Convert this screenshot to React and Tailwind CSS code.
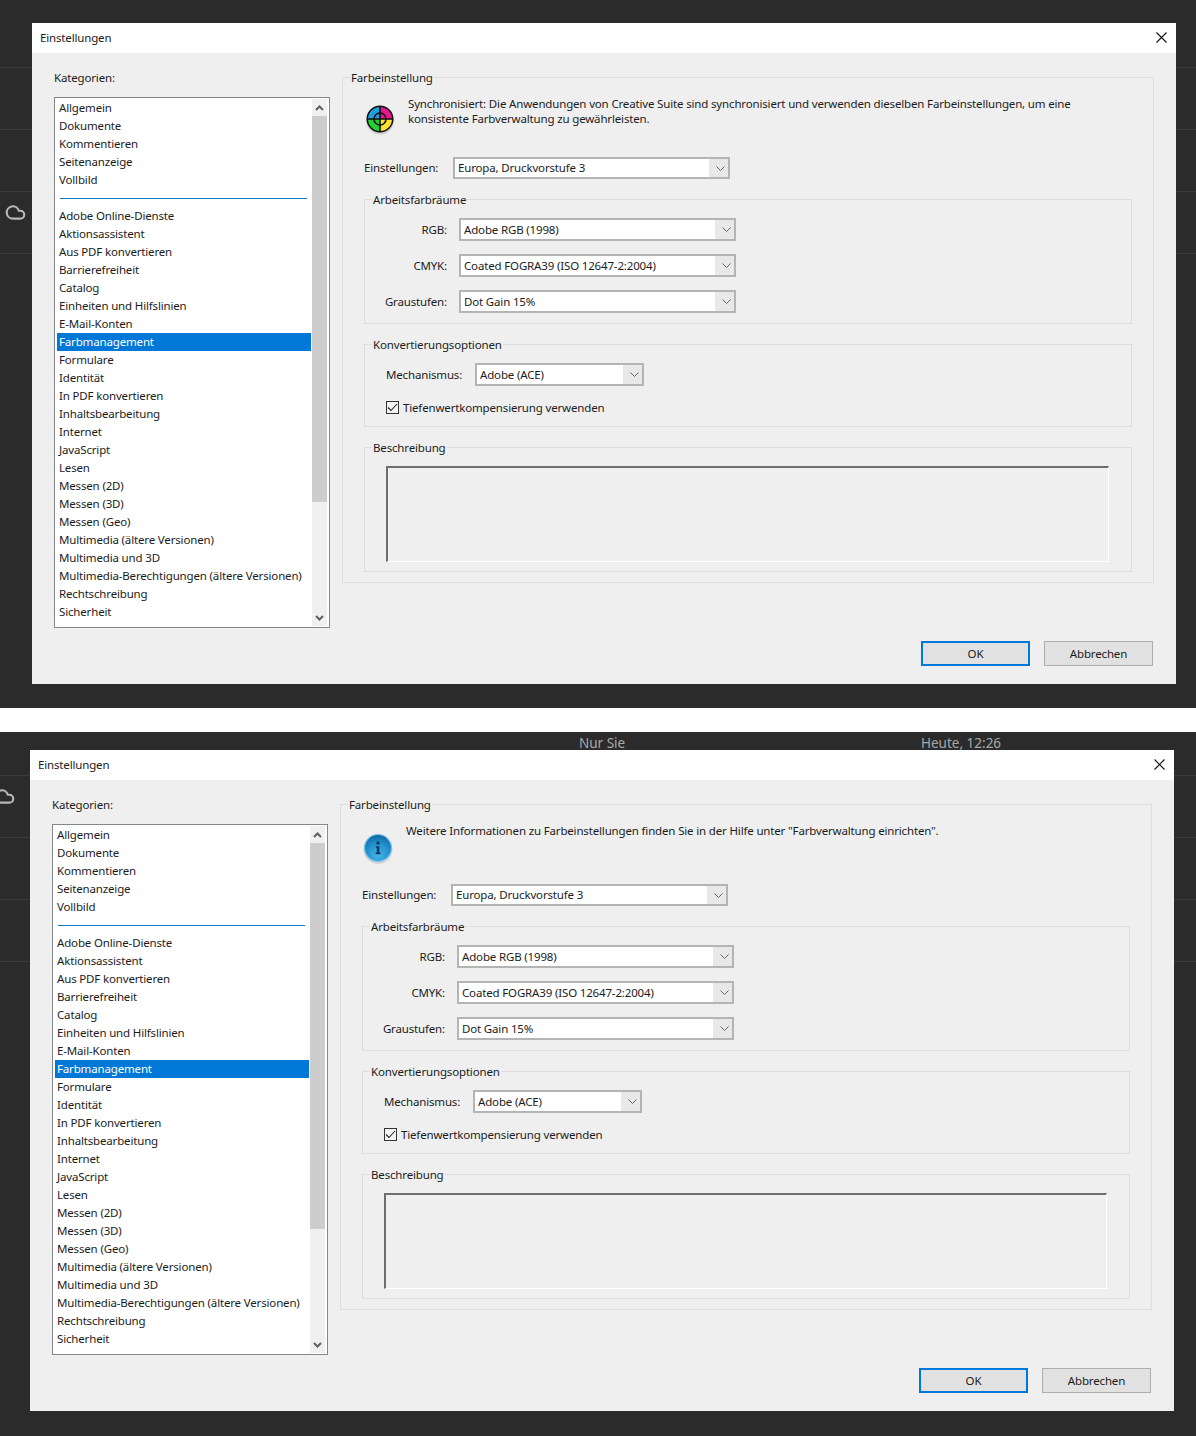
import React from 'react'
import { Cloud } from 'lucide-react'

const topItems = ['Allgemein', 'Dokumente', 'Kommentieren', 'Seitenanzeige', 'Vollbild']
const items = [
  'Adobe Online-Dienste', 'Aktionsassistent', 'Aus PDF konvertieren', 'Barrierefreiheit', 'Catalog',
  'Einheiten und Hilfslinien', 'E-Mail-Konten', 'Farbmanagement', 'Formulare', 'Identität',
  'In PDF konvertieren', 'Inhaltsbearbeitung', 'Internet', 'JavaScript', 'Lesen', 'Messen (2D)',
  'Messen (3D)', 'Messen (Geo)', 'Multimedia (ältere Versionen)', 'Multimedia und 3D',
  'Multimedia-Berechtigungen (ältere Versionen)', 'Rechtschreibung', 'Sicherheit', 'Sicherheit (erweitert)',
]

function Row({ label }) {
  const selected = label === 'Farbmanagement'
  return (
    <div className={`h-[18px] shrink-0 pl-[2px] leading-[17px] whitespace-nowrap ${selected ? 'bg-[#0078d7] text-white' : ''}`}>
      {label}
    </div>
  )
}

function Arrow({ up }) {
  return (
    <div className="h-[17px] flex items-center justify-center shrink-0">
      <svg width="9" height="6" viewBox="0 0 9 6" fill="none" stroke="#606060" strokeWidth="2">
        <path d={up ? 'M1 5L4.5 1.5L8 5' : 'M1 1L4.5 4.5L8 1'} />
      </svg>
    </div>
  )
}

function CategoryList() {
  return (
    <div className="w-[276px] h-[531px] mt-[10px] border border-[#828790] bg-white flex pt-px pr-[2px] pb-px overflow-hidden">
      <div className="w-[257px] pl-[2px] pr-px h-full overflow-hidden flex flex-col">
        {topItems.map((t) => <Row key={t} label={t} />)}
        <div className="h-[18px] shrink-0 flex items-center pl-[3px] pr-[4px]">
          <div className="h-px w-full bg-[#0f7cc4]" />
        </div>
        {items.map((t) => <Row key={t} label={t} />)}
      </div>
      <div className="w-[15px] h-[527px] bg-[#f0f0f0] flex flex-col">
        <Arrow up />
        <div className="h-[386px] bg-[#cdcdcd] shrink-0" />
        <div className="flex-1" />
        <Arrow />
      </div>
    </div>
  )
}

function Group({ title, className, children }) {
  return (
    <div className={`relative border border-[#dedede] ${className}`}>
      <div className="absolute -top-[9px] left-[7px] bg-[#efefef] px-px h-[18px] leading-[17px] whitespace-nowrap">{title}</div>
      {children}
    </div>
  )
}

function Select({ value, className }) {
  return (
    <div className={`border-2 border-[#b4b4b4] bg-white flex shrink-0 ${className}`}>
      <div className="flex-1 pl-[3px] whitespace-nowrap">{value}</div>
      <div className="w-[19px] pl-[3px] bg-[#e8e8e8] flex items-center justify-center">
        <svg width="9" height="5" viewBox="0 0 9 5" fill="none" stroke="#666666" strokeWidth="1">
          <path d="M0.5 0.5L4.5 4.5L8.5 0.5" />
        </svg>
      </div>
    </div>
  )
}

function ColorWheel() {
  return (
    <svg width="32" height="32" viewBox="0 0 32 32">
      <circle cx="16" cy="17.5" r="14" fill="#999999" opacity="0.35" />
      <circle cx="16" cy="16" r="13.5" fill="#111111" />
      <path d="M16 16V4A12 12 0 0 0 4 16Z" fill="#1e9fe0" />
      <path d="M16 16V4A12 12 0 0 1 28 16Z" fill="#e8168c" />
      <path d="M16 16H4A12 12 0 0 0 16 28Z" fill="#22d030" />
      <path d="M16 16H28A12 12 0 0 1 16 28Z" fill="#ffe22e" />
      <circle cx="16" cy="16" r="6" fill="none" stroke="#111111" strokeWidth="1.6" />
      <path d="M16 3V29M3 16H29" stroke="#111111" strokeWidth="1.6" />
    </svg>
  )
}

function InfoIcon() {
  return (
    <svg width="32" height="32" viewBox="0 0 32 32">
      <defs>
        <radialGradient id="infoFill" cx="0.5" cy="0.75" r="0.75">
          <stop offset="0" stopColor="#45b6ea" />
          <stop offset="0.65" stopColor="#1c8ac8" />
          <stop offset="1" stopColor="#10659e" />
        </radialGradient>
      </defs>
      <circle cx="16" cy="17.5" r="14.5" fill="#999999" opacity="0.3" />
      <circle cx="16" cy="16" r="13.5" fill="url(#infoFill)" stroke="#7cc4ea" strokeWidth="1.2" />
      <circle cx="16" cy="11" r="1.8" fill="#123a66" />
      <path d="M13.8 14.2H17.4V20.6H18.6V22.2H13.6V20.6H14.8V15.8H13.8Z" fill="#123a66" />
    </svg>
  )
}

function Dialog({ info }) {
  return (
    <div className="relative w-[1144px] h-[661px] bg-[#efefef] flex flex-col text-[11.5px] tracking-[-0.16px] text-[#1c1c1c] font-['Noto_Sans',sans-serif]">
      <div className="h-[30px] pb-px bg-white flex items-center justify-between pl-[8px] pr-[9px] shrink-0">
        <span>Einstellungen</span>
        <svg width="11" height="11" viewBox="0 0 11 11" stroke="#111111" strokeWidth="1.1">
          <path d="M0.5 0.5L10.5 10.5M10.5 0.5L0.5 10.5" />
        </svg>
      </div>

      <div className="flex pl-[22px] h-[575px] shrink-0">
        <div className="pt-[16px]">
          <div className="h-[18px] leading-[17px]">Kategorien:</div>
          <CategoryList />
        </div>

        <div className="ml-[12px] pt-[24px]">
          <Group title="Farbeinstellung" className="w-[812px] h-[506px] px-[21px]">
            <div className="h-[79px] relative pl-[44px] pt-[19px] leading-[14px]">
              <div className="absolute left-0 top-[25px]">
                {info ? <div className="mt-[2px]"><InfoIcon /></div> : <ColorWheel />}
              </div>
              {info ? (
                <div className="whitespace-nowrap">Weitere Informationen zu Farbeinstellungen finden Sie in der Hilfe unter "Farbverwaltung einrichten".</div>
              ) : (
                <>
                  <div className="whitespace-nowrap h-[15px]">Synchronisiert: Die Anwendungen von Creative Suite sind synchronisiert und verwenden dieselben Farbeinstellungen, um eine</div>
                  <div className="whitespace-nowrap">konsistente Farbverwaltung zu gewährleisten.</div>
                </>
              )}
            </div>

            <div className="flex items-center h-[22px]">
              <div className="w-[89px]">Einstellungen:</div>
              <Select value="Europa, Druckvorstufe 3" className="w-[277px] h-[22px] leading-[18px]" />
            </div>

            <Group title="Arbeitsfarbräume" className="mt-[20px] h-[125px] pt-[18px] flex flex-col gap-[13px]">
              {[
                ['RGB:', 'Adobe RGB (1998)'],
                ['CMYK:', 'Coated FOGRA39 (ISO 12647-2:2004)'],
                ['Graustufen:', 'Dot Gain 15%'],
              ].map(([label, value]) => (
                <div key={label} className="flex items-center">
                  <div className="w-[82px] text-right">{label}</div>
                  <div className="ml-[12px]"><Select value={value} className="w-[277px] h-[23px] leading-[19px]" /></div>
                </div>
              ))}
            </Group>

            <Group title="Konvertierungsoptionen" className="mt-[20px] h-[83px] pt-[18px] pl-[21px]">
              <div className="flex items-center">
                <div className="w-[89px]">Mechanismus:</div>
                <Select value="Adobe (ACE)" className="w-[169px] h-[23px] leading-[19px]" />
              </div>
              <div className="flex items-center mt-[15px] h-[13px]">
                <div className="w-[13px] h-[13px] border border-[#333333] bg-[#f4f4f4] flex items-center justify-center">
                  <svg width="11" height="9" viewBox="0 0 11 9" fill="none" stroke="#222222" strokeWidth="1.1">
                    <path d="M1 4.5L4 7.5L10 1" />
                  </svg>
                </div>
                <span className="ml-[4px] whitespace-nowrap">Tiefenwertkompensierung verwenden</span>
              </div>
            </Group>

            <Group title="Beschreibung" className="mt-[20px] h-[125px] pt-[18px] pl-[21px] pr-[22px]">
              <div className="h-[96px] border-t-2 border-l-2 border-b border-r border-t-[#6e6e6e] border-l-[#6e6e6e] border-b-white border-r-white" />
            </Group>
          </Group>
        </div>
      </div>

      <div className="flex justify-end gap-[14px] pr-[23px] pt-[13px]">
        <button className="w-[109px] h-[25px] bg-[#e1e1e1] border-2 border-[#0078d7]">OK</button>
        <button className="w-[109px] h-[25px] bg-[#e1e1e1] border border-[#adadad]">Abbrechen</button>
      </div>
    </div>
  )
}

function Lines({ first }) {
  return (
    <div className="absolute inset-0 flex flex-col">
      <div className={`${first} shrink-0 border-b border-[#3b3b3b]`} />
      <div className="h-[62px] shrink-0 border-b border-[#3b3b3b]" />
      <div className="h-[62px] shrink-0 border-b border-[#3b3b3b]" />
      <div className="h-[62px] shrink-0 border-b border-[#3b3b3b]" />
    </div>
  )
}

export default function App() {
  return (
    <div className="w-[1196px] h-[1436px] bg-white overflow-hidden">
      <div className="relative h-[708px] bg-[#2b2b2b] pt-[23px] pl-[32px] overflow-hidden">
        <Lines first="h-[68px]" />
        <Cloud size={21} strokeWidth={2.4} className="absolute left-[5px] top-[202px] text-[#b8b8b8]" />
        <Dialog />
      </div>

      <div className="relative h-[704px] mt-[24px] bg-[#2b2b2b] overflow-hidden">
        <Lines first="h-[44px]" />
        <Cloud size={21} strokeWidth={2.4} className="absolute -left-[6px] top-[54px] text-[#b8b8b8]" />
        <div className="relative h-[18px] overflow-hidden flex text-[13.5px] leading-[22px] text-[#a8a8a8] font-['Noto_Sans',sans-serif]">
          <span className="ml-[579px] w-[342px]">Nur Sie</span>
          <span>Heute, 12:26</span>
        </div>
        <div className="pl-[30px]">
          <Dialog info />
        </div>
      </div>
    </div>
  )
}
